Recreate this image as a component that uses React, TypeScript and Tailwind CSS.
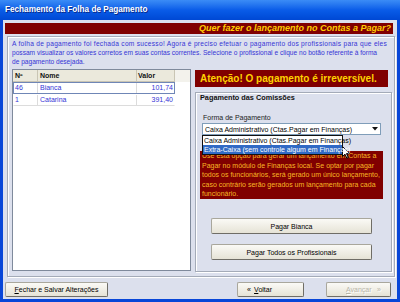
import React from 'react';

type Pagamento = { id: string; nome: string; valor: string };

const PAGAMENTOS: Pagamento[] = [
  { id: '46', nome: 'Bianca', valor: '101,74' },
  { id: '1', nome: 'Catarina', valor: '391,40' },
];

const XpButton: React.FC<{ children: React.ReactNode; disabled?: boolean; className?: string }> = ({
  children,
  disabled,
  className = '',
}) => (
  <button
    disabled={disabled}
    className={`flex items-center justify-center rounded-[2px] border border-[#a9a79c] border-b-[#6f6d66] border-r-[#6f6d66] bg-linear-to-b from-[#fbfaf6] to-[#e6e3d6] text-[7px] leading-none ${
      disabled ? 'text-[#b8b5a8] [text-shadow:1px_1px_0_#fff]' : 'text-black'
    } ${className}`}
  >
    {children}
  </button>
);

const ListaProfissionais = () => (
  <div className="flex h-[202px] w-[179px] flex-col border border-[#7f8a9c] bg-white">
    {/* Header */}
    <div className="flex h-[12px] bg-[#f3f2ec] text-[7px] font-bold leading-[12px] text-[#111]">
      <span className="w-[25px] border-r border-b border-[#c9c5b4] bg-[#ebe9dc] pl-[2px]">Nº</span>
      <span className="w-[99px] border-r border-b border-[#c9c5b4] bg-[#ebe9dc] pl-[2px]">Nome</span>
      <span className="w-[38px] border-r border-b border-[#c9c5b4] bg-[#ebe9dc] pl-[1px]">Valor</span>
    </div>
    {/* Rows */}
    {PAGAMENTOS.map((p, i) => (
      <div
        key={p.id}
        className={`flex h-[12px] w-[162px] text-[7px] leading-[10px] text-[#3535d6] ${
          i === 0 ? 'border border-[#6f86b6]' : 'border border-transparent border-b-[#dcdcdc]'
        }`}
      >
        <span className="w-[24px] border-r border-[#dcdcdc] pl-[1px]">{p.id}</span>
        <span className="w-[99px] border-r border-[#dcdcdc] pl-[2px]">{p.nome}</span>
        <span className="flex-1 pr-[1px] text-right">{p.valor}</span>
      </div>
    ))}
  </div>
);

const PainelPagamento = () => (
  <div className="ml-[4px] flex w-[197px] flex-col">
    <div className="mt-[1px] flex h-[17px] w-[193px] items-center bg-[#800000] pl-[5px] text-[10px] font-bold text-[#ffd200]">
      Atenção! O pagamento é irreversível.
    </div>

    <div className="mt-[5px] flex h-[180px] flex-col border border-[#a4abb8] pl-[6px] shadow-[inset_1px_1px_0_#fff,1px_1px_0_#fff]">
      <div className="-ml-[2px] mt-[1px] text-[7.3px] font-bold leading-[8px] text-[#111]">Pagamento das Comissões</div>

      <div className="mt-[12px] pl-[1px] text-[7px] leading-[8px] text-[#222]">Forma de Pagamento</div>

      <div className="relative mt-[1px] w-[179px]">
        <div className="flex h-[12px] items-center border border-[#7f9db9] bg-white">
          <span className="flex-1 pl-[2px] text-[7px] leading-none text-black">
            Caixa Administrativo (Ctas.Pagar em Finanças)
          </span>
          <span className="flex h-full w-[10px] items-center justify-center">
            <svg width="6" height="4" viewBox="0 0 6 4">
              <path d="M0 0h6L3 3.5z" fill="#111" />
            </svg>
          </span>
        </div>
        {/* Open dropdown */}
        <div className="absolute left-0 top-full z-10 w-[141px] border border-[#111] bg-white text-[7px] leading-[9px]">
          <div className="whitespace-nowrap pl-[1px] text-black">Caixa Administrativo (Ctas.Pagar em Finanças)</div>
          <div className="whitespace-nowrap bg-[#316ac5] pl-[1px] text-white">Extra-Caixa (sem controle algum em Finanças)</div>
        </div>
      </div>

      <div className="-ml-[2px] mt-[16px] h-[48px] w-[183px] bg-[#800000] pl-[2px] text-[7px] leading-[9.5px] whitespace-nowrap text-[#f8b824]">
        Use esta opção para gerar um lançamento em Contas a<br />
        Pagar no módulo de Finanças local. Se optar por pagar<br />
        todos os funcionários, será gerado um único lançamento,<br />
        caso contrário serão gerados um lançamento para cada<br />
        funcionário.
      </div>

      <XpButton className="ml-[9px] mt-[19px] h-[16px] w-[161px]">Pagar Bianca</XpButton>
      <XpButton className="ml-[9px] mt-[10px] h-[16px] w-[161px]">Pagar Todos os Profissionais</XpButton>
    </div>
  </div>
);

export default function App() {
  return (
    <div className="relative flex h-[302px] w-[400px] flex-col bg-[#0846d8] font-['Liberation_Sans',Arial,sans-serif]">
      {/* Title bar */}
      <div className="flex h-[20px] items-center bg-linear-to-b from-[#3b8cf6] via-[#0a5ce8] to-[#0048d4] pl-[5px]">
        <span className="text-[8.2px] font-bold text-white [text-shadow:1px_1px_0_#0b2a88]">
          Fechamento da Folha de Pagamento
        </span>
      </div>

      {/* Client area */}
      <div className="mx-[3px] mb-[3px] flex flex-1 flex-col bg-[#dce0ed]">
        <div className="ml-[2px] mr-[4px] mt-[3px] flex h-[11px] items-center justify-end bg-[#800000] pr-[2px] text-[9px] font-bold italic text-[#ffcc00]">
          Quer fazer o lançamento no Contas a Pagar?
        </div>

        <div className="ml-[4px] mr-[2px] mt-[2px] flex h-[241px] flex-col border border-[#a4abb8] px-[4px] pr-[2px] shadow-[inset_1px_1px_0_#fff,1px_1px_0_#fff]">
          <p className="mt-[2px] whitespace-nowrap text-[6.6px] leading-[9px] text-[#3535d6]">
            <span className="tracking-[0.28px]">
              A folha de pagamento foi fechada com sucesso! Agora é preciso efetuar o pagamento dos profissionais para que eles
            </span>
            <br />
            possam visualizar os valores corretos em suas contas correntes. Selecione o profissional e clique no botão referente à forma
            <br />
            de pagamento desejada.
          </p>
          <div className="mt-[3px] flex">
            <ListaProfissionais />
            <PainelPagamento />
          </div>
        </div>

        <div className="mt-[5px] flex h-[15px]">
          <XpButton className="ml-[2px] w-[103px]">
            <span>
              <u>F</u>echar e Salvar Alterações
            </span>
          </XpButton>
          <XpButton className="ml-[129px] w-[67px]">
            <span className="flex w-full justify-between px-[9px]">
              <span>«</span>
              <span className="mr-[22px]">
                <u>V</u>oltar
              </span>
            </span>
          </XpButton>
          <XpButton disabled className="ml-[22px] w-[65px]">
            <span className="flex w-full justify-between px-[9px]">
              <span className="ml-[10px]">
                <u>A</u>vançar
              </span>
              <span>»</span>
            </span>
          </XpButton>
        </div>
      </div>

      {/* Mouse cursor over the dropdown */}
      <svg className="absolute left-[342px] top-[146px]" width="8" height="13" viewBox="0 0 8 13">
        <path d="M0.5 0.5v10l2.5-2.3 1.8 4 1.5-.7-1.8-3.9h3.2z" fill="#fff" stroke="#000" strokeWidth="1" />
      </svg>
    </div>
  );
}
